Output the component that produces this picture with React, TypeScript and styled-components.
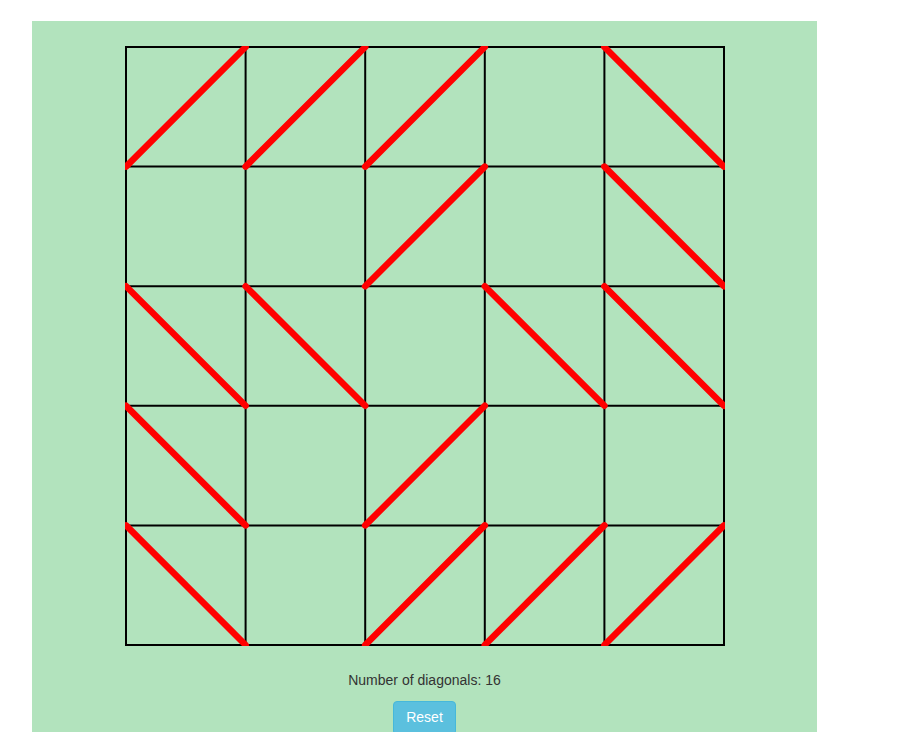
import React, { useState } from "react";
import styled, { createGlobalStyle } from "styled-components";

const Global = createGlobalStyle`
  html, body { margin: 0; padding: 0; background: #ffffff; }
  body { font-family: "Liberation Sans", Arial, sans-serif; font-size: 14px; color: #333333; }
`;

const Panel = styled.div`
  margin: 21px 0 0 32px;
  width: 785px;
  min-height: 720px;
  background: #b2e3bd;
  padding-top: 25px;
  display: flex;
  flex-direction: column;
  align-items: center;
`;

const Board = styled.svg`
  display: block;
  width: 600px;
  height: 600px;
`;

const Count = styled.div`
  margin-top: 24px;
  line-height: 20px;
  font-size: 14px;
  color: #333333;
`;

const ResetButton = styled.button`
  margin-top: 11px;
  font-family: "Liberation Sans", Arial, sans-serif;
  font-size: 14px;
  line-height: 20px;
  padding: 5px 12px 7px;
  color: #ffffff;
  background: #5bc0de;
  border: 1px solid #46b8da;
  border-radius: 4px;
  cursor: pointer;
`;

type Diag = "/" | "\\" | null;

const initial: Diag[][] = [
  ["/", "/", "/", null, "\\"],
  [null, null, "/", null, "\\"],
  ["\\", "\\", null, "\\", "\\"],
  ["\\", null, "/", null, null],
  ["\\", null, "/", "/", "/"],
];

const N = 5;
const STEP = 598 / N;
const pos = (i: number) => 1 + i * STEP;

export default function App() {
  const [grid, setGrid] = useState<Diag[][]>(initial);
  const count = grid.reduce((a, r) => a + r.filter(Boolean).length, 0);

  const lines = [];
  for (let i = 0; i <= N; i++) {
    lines.push(
      <line key={`h${i}`} x1={0} x2={600} y1={pos(i)} y2={pos(i)} stroke="#000" strokeWidth={2} />,
      <line key={`v${i}`} y1={0} y2={600} x1={pos(i)} x2={pos(i)} stroke="#000" strokeWidth={2} />
    );
  }

  const diags = [];
  grid.forEach((row, r) =>
    row.forEach((d, c) => {
      if (!d) return;
      const x0 = pos(c), x1 = pos(c + 1), y0 = pos(r), y1 = pos(r + 1);
      diags.push(
        d === "/" ? (
          <line key={`d${r}-${c}`} x1={x0} y1={y1} x2={x1} y2={y0} stroke="#ff0000" strokeWidth={6.5} strokeLinecap="round" />
        ) : (
          <line key={`d${r}-${c}`} x1={x0} y1={y0} x2={x1} y2={y1} stroke="#ff0000" strokeWidth={6.5} strokeLinecap="round" />
        )
      );
    })
  );

  return (
    <>
      <Global />
      <Panel>
        <Board viewBox="0 0 600 600">
          {lines}
          {diags}
        </Board>
        <Count>Number of diagonals: {count}</Count>
        <ResetButton onClick={() => setGrid(initial.map((r) => r.map(() => null)))}>Reset</ResetButton>
      </Panel>
    </>
  );
}
